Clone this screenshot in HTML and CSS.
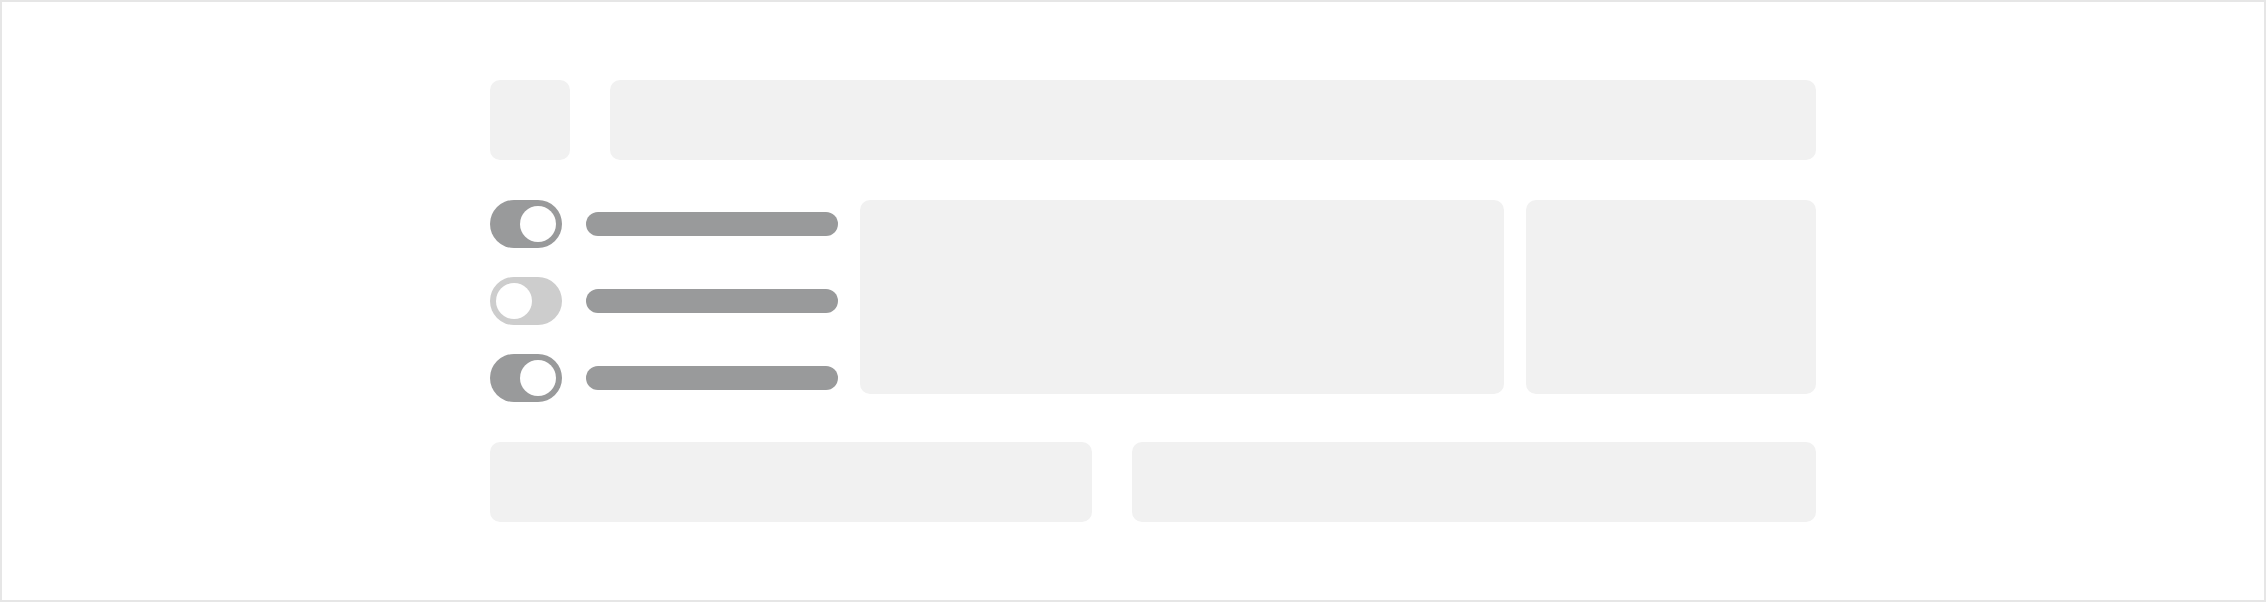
FILE: index.html
```html
<!DOCTYPE html>
<html lang="en">
<head>
<meta charset="utf-8">
<title>Wireframe</title>
<link rel="stylesheet" href="styles.css">
</head>
<body>
<div class="frame">
  <div class="content">
    <div class="row row-top">
      <div class="tile tile-square"></div>
      <div class="tile tile-wide"></div>
    </div>
    <div class="row row-mid">
      <div class="toggle-list">
        <div class="toggle-row">
          <span class="toggle toggle-on"><span class="knob"></span></span>
          <span class="bar"></span>
        </div>
        <div class="toggle-row">
          <span class="toggle toggle-off"><span class="knob"></span></span>
          <span class="bar"></span>
        </div>
        <div class="toggle-row">
          <span class="toggle toggle-on"><span class="knob"></span></span>
          <span class="bar"></span>
        </div>
      </div>
      <div class="tile tile-main"></div>
      <div class="tile tile-side"></div>
    </div>
    <div class="row row-bottom">
      <div class="tile tile-half"></div>
      <div class="tile tile-rest"></div>
    </div>
  </div>
</div>
</body>
</html>
```

FILE: styles.css
```css
html, body {
  margin: 0;
  padding: 0;
  background: #ffffff;
  font-family: "Liberation Sans", Arial, sans-serif;
}

.frame {
  box-sizing: border-box;
  width: 2266px;
  height: 602px;
  border: 2px solid #e6e6e6;
  display: flex;
  padding: 78px 0 0 488px;
}

.content {
  width: 1326px;
  display: flex;
  flex-direction: column;
  gap: 40px;
}

.row {
  display: flex;
  gap: 40px;
}

.tile {
  background: #f1f1f1;
  border-radius: 10px;
}

.tile-square {
  width: 80px;
  height: 80px;
}

.tile-wide {
  flex: 1;
  height: 80px;
}

.row-mid {
  align-items: flex-start;
  gap: 22px;
}

.toggle-list {
  display: flex;
  flex-direction: column;
  gap: 29px;
}

.toggle-row {
  display: flex;
  align-items: center;
  gap: 24px;
}

.toggle {
  box-sizing: border-box;
  width: 72px;
  height: 48px;
  border-radius: 24px;
  padding: 6px;
  display: flex;
}

.toggle-on {
  background: #999a9b;
  justify-content: flex-end;
}

.toggle-off {
  background: #cdcdcd;
  justify-content: flex-start;
}

.knob {
  width: 36px;
  height: 36px;
  border-radius: 50%;
  background: #ffffff;
}

.bar {
  width: 252px;
  height: 24px;
  border-radius: 12px;
  background: #999a9b;
}

.tile-main {
  width: 644px;
  height: 194px;
}

.tile-side {
  flex: 1;
  height: 194px;
}

.tile-half {
  width: 602px;
  height: 80px;
}

.tile-rest {
  flex: 1;
  height: 80px;
}
```
